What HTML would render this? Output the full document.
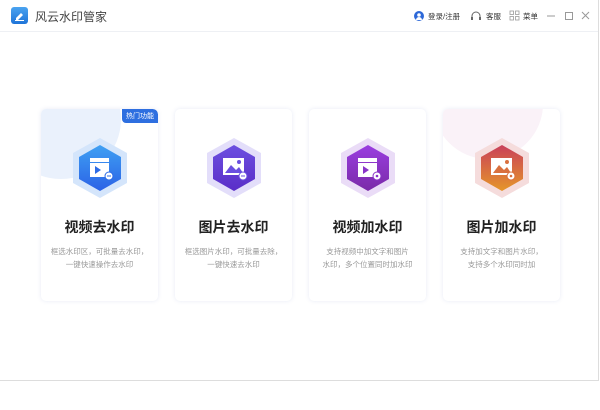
<!DOCTYPE html><html><head><meta charset="utf-8"><style>
body{margin:0;width:600px;height:410px;background:#fff;font-family:"Liberation Sans","Noto Sans CJK SC",sans-serif;position:relative;overflow:hidden}
.win{position:absolute;left:0;top:0;width:598px;height:380px;border-right:1px solid #ddd;border-bottom:1px solid #ddd;background:#fff}
.bar{position:absolute;left:0;top:0;width:598px;height:31px;border-bottom:1px solid #eef0f4}
.card{position:absolute;top:109px;width:117px;height:192px;border-radius:5px;background:#fff;box-shadow:0 0 4px rgba(120,140,200,.18);overflow:hidden}
.t{position:absolute;top:108px;width:117px;text-align:center;font-size:14px;font-weight:bold;color:#222}
.d{position:absolute;top:136px;width:117px;text-align:center;font-size:7.5px;line-height:13px;color:#999}
.hx{position:absolute;left:29px;top:28px}
</style></head><body><div class="win">
<div class="bar">
<div style="position:absolute;left:11px;top:7px;width:17px;height:17px;border-radius:3px;background:linear-gradient(#4aa3f0,#1f74d8)"><svg width="17" height="17"><path d="M5 11l5-5 2 2-5 5H5z" fill="#fff"/><path d="M4 13.5h9" stroke="#fff" stroke-width="1"/></svg></div>
<div style="position:absolute;left:35px;top:8px;font-size:12px;color:#444">风云水印管家</div>
<svg style="position:absolute;left:414px;top:11px" width="10" height="10"><circle cx="5" cy="5" r="5" fill="#2d68d8"/><circle cx="5" cy="4" r="1.8" fill="#fff"/><path d="M2 9a3 3 0 0 1 6 0" fill="#fff"/></svg>
<div style="position:absolute;left:428px;top:11px;font-size:7.5px;color:#333">登录/注册</div>
<svg style="position:absolute;left:470px;top:10px" width="12" height="12"><path d="M2 8V6a4 4 0 0 1 8 0v2" stroke="#666" fill="none"/><rect x="1" y="7" width="2" height="3" fill="#666"/><rect x="9" y="7" width="2" height="3" fill="#666"/></svg>
<div style="position:absolute;left:486px;top:11px;font-size:7.5px;color:#333">客服</div>
<svg style="position:absolute;left:509px;top:10px" width="11" height="11" fill="none" stroke="#999" stroke-width=".8"><rect x="1" y="1" width="3.5" height="3.5"/><rect x="6.5" y="1" width="3.5" height="3.5"/><rect x="1" y="6.5" width="3.5" height="3.5"/><rect x="6.5" y="6.5" width="3.5" height="3.5"/></svg>
<div style="position:absolute;left:523px;top:11px;font-size:7.5px;color:#333">菜单</div>
<svg style="position:absolute;left:546px;top:11px" width="45" height="10" stroke="#999" fill="none"><path d="M1 5h8"/><rect x="19.5" y="1.5" width="7" height="7"/><path d="M36 1l7 7M43 1l-7 7"/></svg>
</div>
<div class="card" style="left:41px"><div style="position:absolute;left:-40px;top:-50px;width:120px;height:120px;border-radius:50%;background:#eaf1fc"></div>
<div style="position:absolute;right:0;top:0;background:#2e6fe0;color:#fff;font-size:7px;padding:2px 4px;border-radius:0 5px 0 4px">热门功能</div>
<svg class="hx" width="60" height="62"><polygon points="30,1 57,16 57,46 30,61 3,46 3,16" fill="#d4e5fb"/><defs><linearGradient id="g1" x1="0" y1="0" x2="0" y2="1"><stop offset="0" stop-color="#3fa0f3"/><stop offset="1" stop-color="#2b62e6"/></linearGradient></defs><polygon points="30,8 51,20 51,42 30,54 9,42 9,20" fill="url(#g1)"/><rect x="20" y="21" width="19" height="4" fill="#fff"/><rect x="20" y="26" width="19" height="14" fill="#fff"/><path d="M25 29v8l6-4z" fill="#2d6be6"/><circle cx="39" cy="39" r="4" fill="#fff" stroke="#2d6be6"/><path d="M37 39h4" stroke="#2d6be6"/></svg>
<div class="t">视频去水印</div><div class="d">框选水印区，可批量去水印，<br>一键快速操作去水印</div></div>
<div class="card" style="left:175px">
<svg class="hx" width="60" height="62"><polygon points="30,1 57,16 57,46 30,61 3,46 3,16" fill="#e3defa"/><defs><linearGradient id="g2" x1="0" y1="0" x2="0" y2="1"><stop offset="0" stop-color="#6c4fe0"/><stop offset="1" stop-color="#5a2ec8"/></linearGradient></defs><polygon points="30,8 51,20 51,42 30,54 9,42 9,20" fill="url(#g2)"/><rect x="19" y="21" width="21" height="17" fill="#fff"/><path d="M21 36l6-8 5 5 3-3 4 6z" fill="#6a4fe0"/><circle cx="35" cy="25" r="2" fill="#6a4fe0"/><circle cx="39" cy="39" r="4" fill="#fff" stroke="#6a4fe0"/><path d="M37 39h4" stroke="#6a4fe0"/></svg>
<div class="t">图片去水印</div><div class="d">框选图片水印，可批量去除，<br>一键快速去水印</div></div>
<div class="card" style="left:309px">
<svg class="hx" width="60" height="62"><polygon points="30,1 57,16 57,46 30,61 3,46 3,16" fill="#eadcf7"/><defs><linearGradient id="g3" x1="0" y1="0" x2="0" y2="1"><stop offset="0" stop-color="#9a3ee0"/><stop offset="1" stop-color="#7a2aa8"/></linearGradient></defs><polygon points="30,8 51,20 51,42 30,54 9,42 9,20" fill="url(#g3)"/><rect x="20" y="21" width="19" height="4" fill="#fff"/><rect x="20" y="26" width="19" height="14" fill="#fff"/><path d="M25 29v8l6-4z" fill="#8a34c8"/><circle cx="39" cy="39" r="4" fill="#fff" stroke="#8a34c8"/><circle cx="39" cy="39" r="1.3" fill="#8a34c8"/></svg>
<div class="t">视频加水印</div><div class="d">支持视频中加文字和图片<br>水印，多个位置同时加水印</div></div>
<div class="card" style="left:443px"><div style="position:absolute;left:-10px;top:-60px;width:110px;height:110px;border-radius:50%;background:#faf2f8"></div>
<svg class="hx" width="60" height="62"><polygon points="30,1 57,16 57,46 30,61 3,46 3,16" fill="#f5dcdc"/><defs><linearGradient id="g4" x1="0" y1="0" x2="0" y2="1"><stop offset="0" stop-color="#c9405a"/><stop offset="1" stop-color="#e5962a"/></linearGradient></defs><polygon points="30,8 51,20 51,42 30,54 9,42 9,20" fill="url(#g4)"/><rect x="19" y="21" width="21" height="17" fill="#fff"/><path d="M21 36l6-8 5 5 3-3 4 6z" fill="#d9703e"/><circle cx="35" cy="25" r="2" fill="#d9703e"/><circle cx="39" cy="39" r="4" fill="#fff" stroke="#d9703e"/><circle cx="39" cy="39" r="1.3" fill="#d9703e"/></svg>
<div class="t">图片加水印</div><div class="d">支持加文字和图片水印，<br>支持多个水印同时加</div></div>
</div></body></html>
